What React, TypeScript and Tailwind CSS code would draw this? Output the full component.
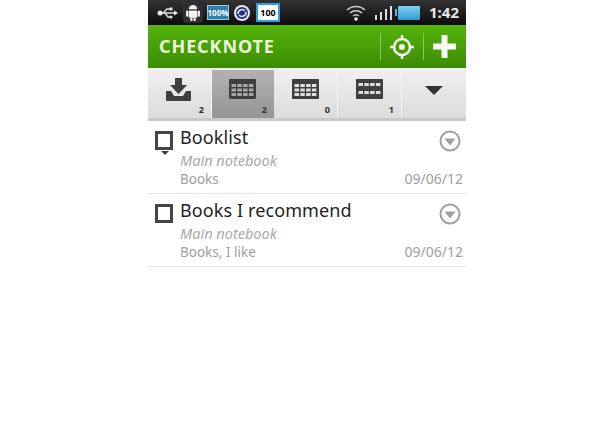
const font = { fontFamily: '"Noto Sans", "Open Sans", sans-serif' }

function GridIcon({ rows = 3, color }: { rows?: number; color: string }) {
  return (
    <svg width="27" height="20" viewBox="0 0 27 20">
      <rect x="0" y="0" width="27" height="20" rx="1" fill="#3f3f3f" />
      {[0, 1, 2, 3].map((c) =>
        (rows === 3 ? [5, 9.5, 14] : [4, 12]).map((y) => (
          <rect key={c + '-' + y} x={2.5 + c * 5.8} y={y} width="4.500" height="3" fill={color} />
        )),
      )}
    </svg>
  )
}

function Tab({ count, active, rows, first }: { count: string; active?: boolean; rows?: number; first?: boolean }) {
  return (
    <div
      className={
        'relative flex h-[48px] justify-center pt-[9px] ' +
        (active ? 'w-[62px] bg-gradient-to-b from-[#b2b2b2] to-[#959595] pr-[2px]' : 'w-[64px] border-r border-[#f4f4f4]')
      }
    >
      {first ? (
        <svg width="25" height="23" viewBox="0 0 25 23" className="-mt-[1px] mr-[2px]">
          <path d="M9 0h7v7h5l-8.500 9L4 7h5z" fill="#3f3f3f" />
          <path d="M0 13h5l3 5h9l3-5h5v9a1 1 0 0 1-1 1H1a1 1 0 0 1-1-1z" fill="#3f3f3f" />
        </svg>
      ) : (
        <GridIcon rows={rows} color={active ? '#a8a8a8' : '#dedede'} />
      )}
      <span className="absolute bottom-[2px] right-[7px] text-[9px] font-bold leading-[12px] text-[#333]">{count}</span>
    </div>
  )
}

function Row({ title, tags, menu }: { title: string; tags: string; menu?: boolean }) {
  return (
    <div className="flex h-[73px] border-b border-[#e6e6e6] pl-[7px] pr-[3px]">
      <div className="relative mr-[7px] mt-[10px] h-[19px] w-[18px] shrink-0 border-[3px] border-[#454545] bg-white">
        {menu && <div className="absolute left-[3px] top-[17px] h-0 w-0 border-x-[4px] border-t-[4px] border-x-transparent border-t-[#3f3f3f]" />}
      </div>
      <div className="flex-1">
        <div className="flex h-[29px] items-start justify-between">
          <span className="pt-[4px] text-[18px] leading-[24px] tracking-[0.1px] text-[#222]">{title}</span>
          <svg className="mr-[2px] mt-[9px]" width="22" height="22" viewBox="0 0 22 22">
            <circle cx="11" cy="11" r="9.500" fill="none" stroke="#a0a0a0" strokeWidth="2" />
            <path d="M5.500 8.500h11L11 15.500z" fill="#a0a0a0" />
          </svg>
        </div>
        <div className="text-[14.500px] italic leading-[20px] text-[#a8a8a8]">Main notebook</div>
        <div className="flex items-center justify-between text-[14px] leading-[18px] text-[#a0a0a0]">
          <span className="text-[13.500px]">{tags}</span>
          <span>09/06/12</span>
        </div>
      </div>
    </div>
  )
}

export default function App() {
  return (
    <div className="min-h-[424px] bg-white" style={font}>
      <div className="ml-[148px] w-[318px]">
        {/* status bar */}
        <div className="flex h-[25px] items-center bg-gradient-to-b from-[#333] to-[#0d0d0d] pl-[9px] pr-[7px]">
          <svg width="22" height="12" viewBox="0 0 22 12" className="mr-[4px]">
            <path d="M1 6h18M6 6l4-4h3M8 6l3 4h3" fill="none" stroke="#ddd" strokeWidth="1.300" />
            <circle cx="3" cy="6" r="2.500" fill="#eee" />
            <path d="M17 3.500l4 2.500-4 2.500z" fill="#eee" />
            <rect x="12.500" y="0.500" width="3" height="3" fill="#ddd" />
            <circle cx="14" cy="10" r="1.600" fill="#ddd" />
          </svg>
          <div className="mr-[4px] flex h-[21px] w-[20px] items-center justify-center rounded-sm bg-[#2e2e2e]">
            <svg width="16" height="17" viewBox="0 0 14 16">
              <path d="M3 5a4 4 0 0 1 8 0z" fill="#f2f2f2" />
              <rect x="3" y="6" width="8" height="7" rx="1" fill="#f2f2f2" />
              <rect x="0.500" y="6" width="2" height="6" rx="1" fill="#f2f2f2" />
              <rect x="11.500" y="6" width="2" height="6" rx="1" fill="#f2f2f2" />
              <rect x="4.500" y="13" width="2" height="3" fill="#f2f2f2" />
              <rect x="7.500" y="13" width="2" height="3" fill="#f2f2f2" />
            </svg>
          </div>
          <div className="mr-[4px] flex h-[15px] w-[22px] items-center justify-center border border-[#9cc] bg-[#2f7fb5] text-[8px] font-bold leading-none text-white">
            100%
          </div>
          <svg width="18" height="18" viewBox="0 0 18 18" className="mr-[5px]">
            <circle cx="9" cy="9" r="8" fill="#e8e8f4" />
            <circle cx="9" cy="9" r="6" fill="#23307a" />
            <path d="M5 10a4 4 0 0 1 7-3M13 8a4 4 0 0 1-7 3" fill="none" stroke="#e8e8f4" strokeWidth="1.500" />
          </svg>
          <div className="flex h-[19px] w-[24px] items-center justify-center border-2 border-[#2aa0e0] bg-white text-[9px] font-bold leading-none text-black">
            100
          </div>
          <div className="flex-1" />
          <svg width="20" height="17" viewBox="0 0 20 17" className="mr-[9px]">
            <g fill="none" stroke="#ccc" strokeWidth="1.500">
              <path d="M1 6a13 13 0 0 1 18 0" />
              <path d="M4 9a9 9 0 0 1 12 0" />
              <path d="M7 12a4.500 4.500 0 0 1 6 0" />
            </g>
            <circle cx="10" cy="15" r="1.800" fill="#eee" />
          </svg>
          <div className="mr-[3px] flex items-end gap-[3px]">
            <div className="h-[5px] w-[2px] bg-[#ddd]" />
            <div className="h-[8px] w-[2px] bg-[#ddd]" />
            <div className="h-[11px] w-[2px] bg-[#ddd]" />
            <div className="h-[14px] w-[2px] bg-[#ddd]" />
          </div>
          <div className="mr-[1px] h-[7px] w-[2px] bg-[#5ab0dc]" />
          <div className="mr-[9px] h-[14px] w-[22px] rounded-[1px] bg-gradient-to-b from-[#7fd0f2] to-[#2f9ad2]" />
          <span className="text-[15px] font-bold leading-none text-[#e8e8e8]">1:42</span>
        </div>

        {/* header */}
        <div className="flex h-[43px] items-center bg-gradient-to-b from-[#55b40a] to-[#3c8c04] pl-[11px] pr-[9px]">
          <span className="flex-1 text-[18px] font-bold tracking-[0.9px] text-[#eaf7dc]">CHECKNOTE</span>
          <div className="mr-[8px] h-[27px] w-px bg-[#8cc764]" />
          <svg width="26" height="26" viewBox="0 0 26 26" className="mr-[8px]">
            <circle cx="13" cy="13" r="8" fill="none" stroke="#f4faee" strokeWidth="2.500" />
            <circle cx="13" cy="13" r="3" fill="#f4faee" />
            <path d="M13 1v5M13 20v5M1 13h5M20 13h5" stroke="#f4faee" strokeWidth="2.500" />
          </svg>
          <div className="mr-[9px] h-[27px] w-px bg-[#8cc764]" />
          <svg width="23" height="23" viewBox="0 0 23 23" className="mr-[1px]">
            <path d="M8.500 0h6v8.500H23v6h-8.500V23h-6v-8.500H0v-6h8.500z" fill="#fafdf6" />
          </svg>
        </div>

        {/* toolbar */}
        <div className="flex h-[53px] items-start border-b-[3px] border-[#c9c9c9] bg-gradient-to-b from-[#f0f0f0] to-[#dcdcdc] pt-[2px]">
          <Tab first count="2" />
          <Tab active count="2" />
          <Tab count="0" />
          <Tab count="1" rows={2} />
          <div className="flex h-[48px] flex-1 justify-center pt-[16px]">
            <div className="h-0 w-0 border-x-[9px] border-t-[9px] border-x-transparent border-t-[#333]" />
          </div>
        </div>

        <Row title="Booklist" tags="Books" menu />
        <Row title="Books I recommend" tags="Books, I like" />
      </div>
    </div>
  )
}
